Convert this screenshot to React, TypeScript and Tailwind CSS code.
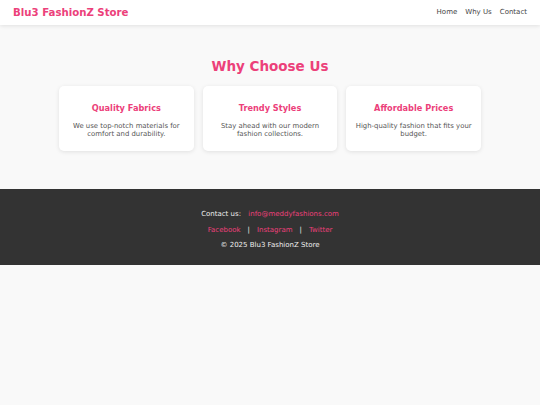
export default function App() {
  const features = [
    { title: 'Quality Fabrics', text: 'We use top-notch materials for comfort and durability.' },
    { title: 'Trendy Styles', text: 'Stay ahead with our modern fashion collections.' },
    { title: 'Affordable Prices', text: 'High-quality fashion that fits your budget.' },
  ];

  return (
    <div className="min-h-[405px] bg-[#f9f9f9] font-['DejaVu_Sans',sans-serif]">
      {/* Header */}
      <header className="h-[25px] bg-white shadow-[0_1px_4px_rgba(0,0,0,0.1)] flex items-center justify-between px-[13px]">
        <div className="text-[10.2px] font-bold text-[#ec407a]">Blu3 FashionZ Store</div>
        <nav className="flex gap-[8px] text-[7px] text-[#444]">
          <a>Home</a>
          <a>Why Us</a>
          <a>Contact</a>
        </nav>
      </header>

      {/* Why Choose Us */}
      <section className="pt-[31px] pb-[38px] text-center">
        <h2 className="text-[13.5px] font-bold text-[#ec407a] mb-[10px]">Why Choose Us</h2>
        <div className="w-[422px] mx-auto grid grid-cols-3 gap-[9px]">
          {features.map((f) => (
            <div key={f.title} className="bg-white rounded-[5px] shadow-[0_1px_4px_rgba(0,0,0,0.1)] h-[65px] px-[8px] pt-[16px]">
              <h3 className="text-[8.2px] font-bold text-[#ec407a] mb-[7px]">{f.title}</h3>
              <p className="text-[6.9px] leading-[8px] text-[#555]">{f.text}</p>
            </div>
          ))}
        </div>
      </section>

      {/* Footer */}
      <footer className="h-[76px] bg-[#333] text-[#eee] text-[7px] text-center pt-[20px] flex flex-col gap-[5px]">
        <p>
          Contact us: <a className="text-[#ec407a] ml-[5px]">info@meddyfashions.com</a>
        </p>
        <p>
          <a className="text-[#ec407a]">Facebook</a>
          <span className="mx-[7px]">|</span>
          <a className="text-[#ec407a]">Instagram</a>
          <span className="mx-[7px]">|</span>
          <a className="text-[#ec407a]">Twitter</a>
        </p>
        <p>© 2025 Blu3 FashionZ Store</p>
      </footer>
    </div>
  );
}
